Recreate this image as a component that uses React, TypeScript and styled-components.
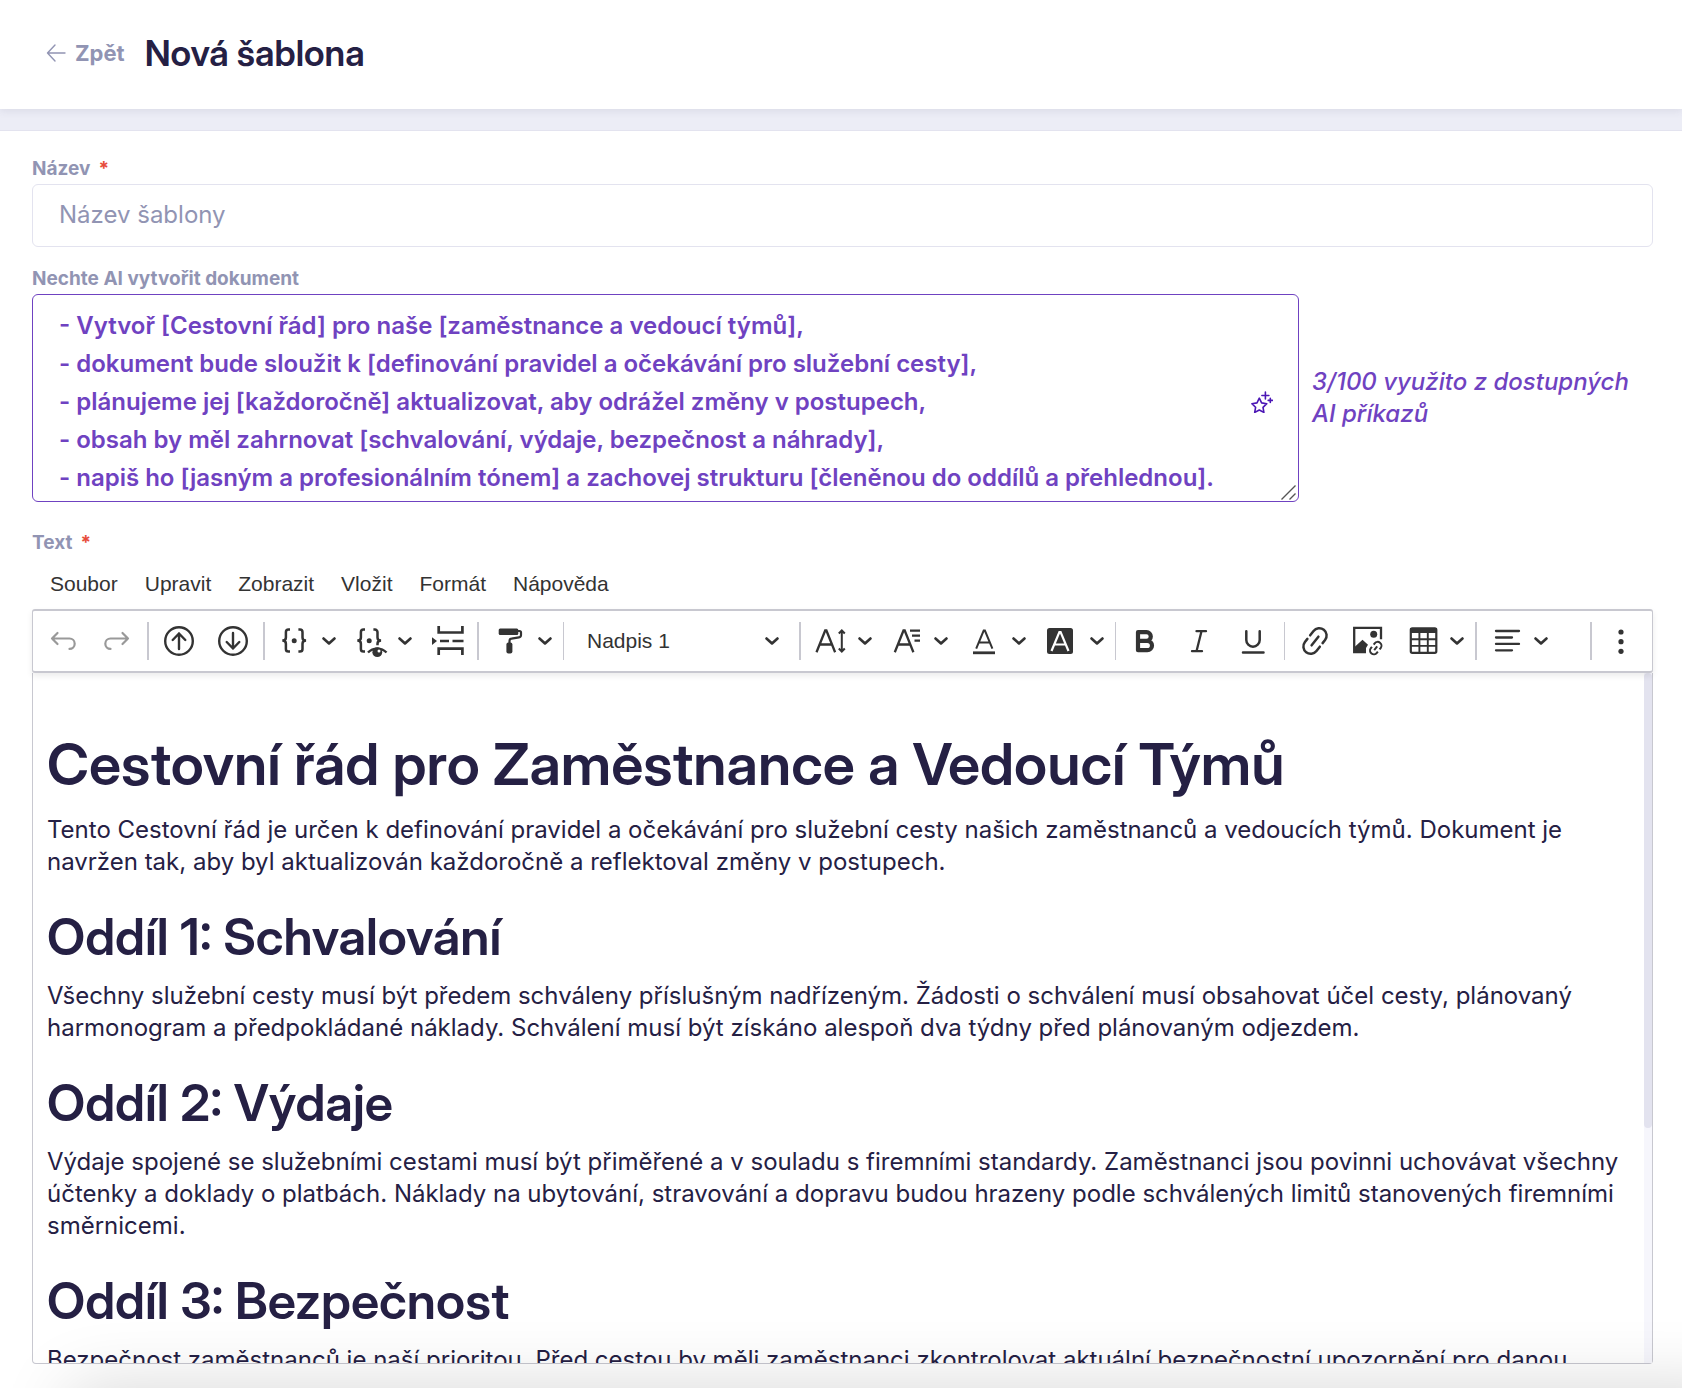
import React, { useState } from 'react';
import styled, { createGlobalStyle, css } from 'styled-components';

const color = {
  ink: '#252044',
  muted: '#9194b3',
  line: '#e3e3ef',
  band: '#ecedf6',
  purple: '#6f42c1',
  violet: '#4b16b5',
  red: '#e74c3c',
  tool: '#333333',
  toolLine: '#c8c8d0',
};

const GlobalStyle = createGlobalStyle`
  *, *::before, *::after { box-sizing: border-box; }
  body {
    margin: 0;
    background: #fff;
    color: ${color.ink};
    font-family: Inter, "Liberation Sans", sans-serif;
    font-size: 24px;
    line-height: 32px;
  }
  h1, h2 { font-family: "Inter Display", Inter, "Liberation Sans", sans-serif; font-variation-settings: "opsz" 32; }
  button, input, select, textarea { font: inherit; color: inherit; }
`;

const Page = styled.div`
  display: flex;
  flex-direction: column;
  height: 100vh;
  min-height: 900px;
  overflow: hidden;
`;

const Header = styled.header`
  position: relative;
  display: flex;
  align-items: center;
  gap: 20px;
  padding: 31px 46px 34px;
  background: #fff;
  box-shadow: 0 2px 8px rgba(60, 60, 100, 0.1);
`;

const BackLink = styled.a`
  display: flex;
  align-items: center;
  gap: 9px;
  color: ${color.muted};
  font-size: 22px;
  font-weight: 700;
  text-decoration: none;
`;

const Title = styled.h1`
  margin: 0;
  font-size: 36px;
  font-weight: 600;
  line-height: 44px;
`;

const Band = styled.div`
  display: flex;
  flex: 1;
  flex-direction: column;
  min-height: 0;
  background: ${color.band};
`;

const Form = styled.form`
  display: flex;
  flex: 1;
  flex-direction: column;
  min-height: 0;
  margin-top: 21px;
  padding: 24px 29px 24px 32px;
  border-top: 1px solid ${color.line};
  background: #fff;
`;

const Label = styled.label`
  display: block;
  padding-bottom: 1px;
  color: ${color.muted};
  font-size: 19px;
  font-weight: 700;
  line-height: 28px;
`;

const Required = styled.span`
  margin-left: 8px;
  color: ${color.red};
`;

const NameInput = styled.input`
  width: 100%;
  height: 63px;
  flex: none;
  margin-bottom: 18px;
  padding: 0 26px 2px;
  border: 1px solid ${color.line};
  border-radius: 6px;
  background: #fff;
  outline: none;
  &::placeholder { color: ${color.muted}; opacity: 1; }
`;

const PromptRow = styled.div`
  display: flex;
  align-items: center;
  gap: 13px;
  margin-bottom: 27px;
`;

const PromptBox = styled.div`
  position: relative;
  display: flex;
  flex: 1;
`;

const Prompt = styled.textarea`
  width: 100%;
  height: 208px;
  padding: 12px 60px 4px 26px;
  border: 1px solid ${color.purple};
  border-radius: 6px;
  background: #fff;
  color: ${color.purple};
  font-weight: 600;
  line-height: 38px;
  outline: none;
  overflow: hidden;
  resize: vertical;
  &::-webkit-resizer { display: none; }
`;

const Grip = styled.svg`
  position: absolute;
  right: 3px;
  bottom: 2px;
  pointer-events: none;
`;

const MagicButton = styled.button`
  position: absolute;
  top: 93px;
  right: 22px;
  display: grid;
  place-items: center;
  width: 30px;
  height: 30px;
  padding: 0;
  border: 0;
  background: none;
  color: ${color.violet};
`;

const Usage = styled.p`
  width: 341px;
  margin: 0;
  color: ${color.purple};
  font-style: italic;
  font-weight: 500;
`;

const Editor = styled.section`
  display: flex;
  flex: 1;
  flex-direction: column;
  min-height: 0;
  color: ${color.tool};
`;

const MenuBar = styled.nav`
  display: flex;
  gap: 27px;
  padding: 14px 18px 13px;
`;

const MenuItem = styled.button`
  padding: 0;
  border: 0;
  background: none;
  font-family: "Liberation Sans", Arial, sans-serif;
  font-size: 21px;
  line-height: 24px;
`;

const Toolbar = styled.div`
  position: relative;
  display: flex;
  align-items: center;
  height: 64px;
  flex: none;
  border: solid ${color.toolLine};
  border-width: 2px 1px;
  border-radius: 3px;
  background: #fff;
  box-shadow: 0 3px 6px rgba(0, 0, 0, 0.08);
`;

const Group = styled.div<{ $line?: number }>`
  display: flex;
  height: 38px;
  padding: 0 3px;
  border-right: ${(p) => p.$line ?? 0}px solid ${color.toolLine};
`;

const LastGroup = styled(Group)`
  margin-left: auto;
  border-left: 2px solid ${color.toolLine};
`;

const plainButton = css`
  display: flex;
  align-items: center;
  height: 38px;
  padding: 0;
  border: 0;
  background: none;
  color: ${color.tool};
`;

const ToolButton = styled.button`
  ${plainButton}
  justify-content: center;
  width: 54px;
  &:disabled { color: #999; }
`;

const MenuTool = styled.button`
  ${plainButton}
  gap: 10px;
  width: 76px;
  padding-left: 8px;
`;

const ArrowButton = styled.button`
  ${plainButton}
  width: 24px;
  padding-left: 2px;
`;

const SelectBox = styled.div`
  display: flex;
  align-items: center;
  width: 229px;
  padding-right: 17px;
`;

const FormatSelect = styled.select`
  flex: 1;
  height: 38px;
  padding: 0 0 0 20px;
  border: 0;
  appearance: none;
  background: none;
  font-family: "Liberation Sans", Arial, sans-serif;
  font-size: 21px;
`;

const Canvas = styled.div`
  display: flex;
  flex: 1;
  min-height: 0;
  border: 1px solid ${color.toolLine};
  border-top: 0;
  border-radius: 0 0 4px 4px;
`;

const Document = styled.article`
  flex: 1;
  min-width: 0;
  overflow: hidden;
  padding: 56px 14px 0;
  color: ${color.ink};
  outline: none;

  h1, h2 { margin: 0; font-weight: 600; }
  h1 { margin-bottom: 15px; font-size: 58px; line-height: 70px; }
  h2 { margin-bottom: 13px; font-size: 51px; line-height: 60px; }
  p { margin: 0 0 29px; }
`;

const Track = styled.div`
  width: 8px;
  flex: none;
  background: #f6f6fc;
`;

const Thumb = styled.div`
  height: 66%;
  border-radius: 4px;
  background: ${color.line};
`;

const BottomShade = styled.div`
  position: fixed;
  top: 100%;
  left: 70px;
  right: -60px;
  height: 140px;
  box-shadow: 0 0 70px rgba(0, 0, 0, 0.16);
  pointer-events: none;
`;

const Chevron = () => (
  <svg width="14" height="8" viewBox="0 0 14 8" fill="none" stroke="currentColor" strokeWidth="2.6" strokeLinecap="round" strokeLinejoin="round" aria-hidden="true">
    <path d="M1.5 1.5 7 6.5l5.5-5" />
  </svg>
);

const Icon = ({ children, w = 2.4 }: { children: React.ReactNode; w?: number }) => (
  <svg width="36" height="36" viewBox="0 0 36 36" fill="none" stroke="currentColor" strokeWidth={w} aria-hidden="true">
    {children}
  </svg>
);

const leftBrace = 'M14 6.6h-1.5a2.6 2.6 0 0 0-2.6 2.6v5.3c0 2-1.4 3.1-3.6 3.1 2.2 0 3.6 1.1 3.6 3.1V26a2.6 2.6 0 0 0 2.6 2.6H14';

const icons = {
  undo: (
    <Icon w={2.2}>
      <path strokeLinecap="round" strokeLinejoin="round" d="M12.5 10 7 15.5l5.5 5.5M7 15.5h17.5a5.2 5.2 0 0 1 0 10.4" />
    </Icon>
  ),
  redo: (
    <Icon w={2.2}>
      <path strokeLinecap="round" strokeLinejoin="round" d="M23.5 10l5.5 5.5-5.5 5.5M29 15.5H11.5a5.2 5.2 0 0 0 0 10.4" />
    </Icon>
  ),
  up: (
    <Icon>
      <circle cx="18" cy="18" r="13.8" />
      <path strokeLinecap="round" strokeLinejoin="round" d="M18 26V10.5M11.7 17 18 10.5l6.3 6.5" />
    </Icon>
  ),
  down: (
    <Icon>
      <circle cx="18" cy="18" r="13.8" />
      <path strokeLinecap="round" strokeLinejoin="round" d="M18 10v15.5M11.7 19l6.3 6.5 6.3-6.5" />
    </Icon>
  ),
  merge: (
    <Icon w={2.5}>
      <path d={leftBrace} />
      <path d={leftBrace} transform="matrix(-1 0 0 1 36.4 0)" />
      <circle cx="18.2" cy="17.7" r="2.5" fill="currentColor" stroke="none" />
    </Icon>
  ),
  preview: (
    <Icon w={2.5}>
      <path d="M13 6.6h-1.5a2.6 2.6 0 0 0-2.6 2.6v5.3c0 2-1.4 3.1-3.6 3.1 2.2 0 3.6 1.1 3.6 3.1V26a2.6 2.6 0 0 0 2.6 2.6H13" />
      <path d="M21.4 6.6h1.5a2.6 2.6 0 0 1 2.6 2.6v5.3c0 2 1.4 3.1 3.6 3.1-2.2 0-3.6 1.1-3.6 3.1v1.6" />
      <circle cx="17.2" cy="17.7" r="2.5" fill="currentColor" stroke="none" />
      <path d="M16 29.5c5-5.2 13.5-5.2 18.5 0" strokeWidth="2.4" />
      <circle cx="25.3" cy="29.2" r="4.9" fill="currentColor" stroke="none" />
      <circle cx="27" cy="28" r="1.5" fill="#fff" stroke="none" />
    </Icon>
  ),
  pageBreak: (
    <Icon w={2.7}>
      <path d="M9.7 3v6.5h23.7V3M9.7 32v-6.3h23.7V32M11 18h9M23.5 18h11" />
      <path d="M3 14.2 8 18l-5 4z" fill="currentColor" stroke="none" />
    </Icon>
  ),
  roller: (
    <Icon w={2.2}>
      <rect x="7.7" y="5.5" width="19.6" height="6.6" rx="1.5" fill="currentColor" stroke="none" />
      <path d="M27 8h1.5a1.5 1.5 0 0 1 1.5 1.5V12a2.4 2.4 0 0 1-2 2.4l-7.5 1.3a2.2 2.2 0 0 0-2 2.2V20" />
      <rect x="15.4" y="19.5" width="6" height="11" rx="2" fill="currentColor" stroke="none" />
    </Icon>
  ),
  fontSize: (
    <Icon w={2.3}>
      <path d="M4.5 29.3 13.2 7.5h1.2l8.7 21.8M7.5 21.5H20" />
      <path d="M29.8 7.5v21M26.8 10.5l3-3 3 3M26.8 25.5l3 3 3-3" strokeWidth="2" />
    </Icon>
  ),
  lineHeight: (
    <Icon w={2.3}>
      <path d="M6.8 29.3 15.5 7.5h1.2l8.7 21.8M9.8 21.5h12.5M22 7.7h10M24 12.7h8M26.5 17.7H32" />
    </Icon>
  ),
  textColor: (
    <Icon w={2}>
      <path d="M11.2 25.6 18.7 7.5h1.2l7.5 18.1M13.8 19.5h11" />
      <path d="M8 29.8h22" strokeWidth="2.8" />
    </Icon>
  ),
  highlight: (
    <Icon w={2.2}>
      <rect x="4" y="5" width="26" height="26" rx="2.5" fill="currentColor" stroke="none" />
      <path stroke="#fff" d="M8.5 28 16.4 9h1.2l7.9 19M11.2 21.5h11.6" />
    </Icon>
  ),
  bold: (
    <Icon w={4.2}>
      <path strokeLinejoin="round" d="M10 9.2h8.5a4.3 4.3 0 0 1 0 8.6H10zM10 17.8h9.3a4.7 4.7 0 0 1 0 9.4H10z" />
    </Icon>
  ),
  italic: (
    <Icon w={2.3}>
      <path strokeLinecap="round" d="M14.5 8.2H24M10 28.2h10M19.5 8.2l-5 20" />
    </Icon>
  ),
  underline: (
    <Icon w={2.5}>
      <path strokeLinecap="round" d="M10.3 8.2V17a6.7 6.7 0 0 0 13.4 0V8.2M7 29.5h20.5" />
    </Icon>
  ),
  link: (
    <Icon w={2.5}>
      <g transform="rotate(-52 18 18)" strokeLinecap="round">
        <path d="M15 10.7h-4a7.3 7.3 0 0 0 0 14.6h5.5M21 25.3h4a7.3 7.3 0 0 0 0-14.6h-5.5M12.5 18h11" />
      </g>
    </Icon>
  ),
  image: (
    <Icon w={2.3}>
      <path d="M15 29H3.2V4.8H30v11.5" />
      <circle cx="22.7" cy="11.3" r="3.5" fill="currentColor" stroke="none" />
      <path d="M3 24.5l8.5-7.8 5.5 5-2 3.3v5H3z" fill="currentColor" stroke="none" />
      <g transform="translate(16.5 17) rotate(-52 8.2 8.2)" strokeWidth="2">
        <path d="M7 4.4H5.2a3.8 3.8 0 0 0 0 7.6h1.6M9.6 12h1.8a3.8 3.8 0 0 0 0-7.6H9.8M5.8 8.2h4.8" />
      </g>
    </Icon>
  ),
  table: (
    <Icon w={1.9}>
      <rect x="6.8" y="5.3" width="25.5" height="24.5" rx="1.5" strokeWidth="2.2" />
      <path d="M6 5h27v5H6z" fill="currentColor" stroke="none" />
      <path d="M15.4 9v21M23.8 9v21M7 16.3h25M7 22.9h25" />
    </Icon>
  ),
  align: (
    <Icon w={2.3}>
      <path strokeLinecap="round" d="M8 8h23M8 14.5h16M8 20.9h23M8 27.3h16" />
    </Icon>
  ),
  more: (
    <Icon>
      <g fill="currentColor" stroke="none">
        <circle cx="17" cy="9" r="2.6" />
        <circle cx="17" cy="18.7" r="2.6" />
        <circle cx="17" cy="28.3" r="2.6" />
      </g>
    </Icon>
  ),
};

type IconName = keyof typeof icons;

const Tool = ({ icon, label, disabled }: { icon: IconName; label: string; disabled?: boolean }) => (
  <ToolButton type="button" aria-label={label} disabled={disabled}>{icons[icon]}</ToolButton>
);

const DropTool = ({ icon, label }: { icon: IconName; label: string }) => (
  <MenuTool type="button" aria-label={label}>{icons[icon]}<Chevron /></MenuTool>
);

const SplitTool = ({ icon, label }: { icon: IconName; label: string }) => (
  <>
    <Tool icon={icon} label={label} />
    <ArrowButton type="button" aria-label={`${label} – možnosti`}><Chevron /></ArrowButton>
  </>
);

const BackArrow = () => (
  <svg width="20" height="18" viewBox="0 0 20 18" fill="none" stroke="currentColor" strokeWidth="1.4" strokeLinecap="round" strokeLinejoin="round" aria-hidden="true">
    <path d="M9 1 1.5 9 9 17M1.5 9H19" />
  </svg>
);

const Sparkle = () => (
  <svg width="22" height="22" viewBox="0 0 22 22" fill="none" stroke="currentColor" strokeWidth="1.6" strokeLinecap="round" strokeLinejoin="round" aria-hidden="true">
    <path d="M8.3 7.2l2.3 4.7 5.2.8-3.8 3.6.9 5.1-4.6-2.4-4.6 2.4.9-5.1L.9 12.7l5.1-.8z" />
    <path d="M14.4 1v7M10.9 4.5h7M19.3 7.3v4.2M17.2 9.4h4.2" />
  </svg>
);

const menus = ['Soubor', 'Upravit', 'Zobrazit', 'Vložit', 'Formát', 'Nápověda'];

const initialPrompt = [
  '- Vytvoř [Cestovní řád] pro naše [zaměstnance a vedoucí týmů],',
  '- dokument bude sloužit k [definování pravidel a očekávání pro služební cesty],',
  '- plánujeme jej [každoročně] aktualizovat, aby odrážel změny v postupech,',
  '- obsah by měl zahrnovat [schvalování, výdaje, bezpečnost a náhrady],',
  '- napiš ho [jasným a profesionálním tónem] a zachovej strukturu [členěnou do oddílů a přehlednou].',
].join('\n');

const sections = [
  {
    title: 'Oddíl 1: Schvalování',
    text: 'Všechny služební cesty musí být předem schváleny příslušným nadřízeným. Žádosti o schválení musí obsahovat účel cesty, plánovaný harmonogram a předpokládané náklady. Schválení musí být získáno alespoň dva týdny před plánovaným odjezdem.',
  },
  {
    title: 'Oddíl 2: Výdaje',
    text: 'Výdaje spojené se služebními cestami musí být přiměřené a v souladu s firemními standardy. Zaměstnanci jsou povinni uchovávat všechny účtenky a doklady o platbách. Náklady na ubytování, stravování a dopravu budou hrazeny podle schválených limitů stanovených firemními směrnicemi.',
  },
  {
    title: 'Oddíl 3: Bezpečnost',
    text: 'Bezpečnost zaměstnanců je naší prioritou. Před cestou by měli zaměstnanci zkontrolovat aktuální bezpečnostní upozornění pro danou',
  },
];

export default function App() {
  const [name, setName] = useState('');
  const [prompt, setPrompt] = useState(initialPrompt);

  return (
    <>
      <GlobalStyle />
      <Page>
        <Header>
          <BackLink href="#zpet"><BackArrow />Zpět</BackLink>
          <Title>Nová šablona</Title>
        </Header>
        <Band>
          <Form onSubmit={(e) => e.preventDefault()}>
            <Label htmlFor="name">Název<Required>*</Required></Label>
            <NameInput id="name" placeholder="Název šablony" value={name} onChange={(e) => setName(e.target.value)} />

            <Label htmlFor="prompt">Nechte AI vytvořit dokument</Label>
            <PromptRow>
              <PromptBox>
                <Prompt id="prompt" spellCheck={false} value={prompt} onChange={(e) => setPrompt(e.target.value)} />
                <MagicButton type="button" aria-label="Vytvořit pomocí AI"><Sparkle /></MagicButton>
                <Grip width="15" height="15" viewBox="0 0 15 15" fill="none" stroke="#555" strokeWidth="1.4" aria-hidden="true">
                  <path d="M.5 14.5l14-14M8.5 14.5l6-6" />
                </Grip>
              </PromptBox>
              <Usage>3/100 využito z dostupných AI příkazů</Usage>
            </PromptRow>

            <Label as="div" id="text-label">Text<Required>*</Required></Label>
            <Editor aria-labelledby="text-label">
              <MenuBar>
                {menus.map((m) => <MenuItem type="button" key={m}>{m}</MenuItem>)}
              </MenuBar>
              <Toolbar role="toolbar">
                <Group $line={2}>
                  <Tool icon="undo" label="Zpět" disabled />
                  <Tool icon="redo" label="Znovu" disabled />
                </Group>
                <Group $line={2}>
                  <Tool icon="up" label="Nahoru" />
                  <Tool icon="down" label="Dolů" />
                </Group>
                <Group $line={2}>
                  <DropTool icon="merge" label="Proměnné" />
                  <DropTool icon="preview" label="Náhled proměnných" />
                  <Tool icon="pageBreak" label="Konec stránky" />
                </Group>
                <Group $line={1}>
                  <SplitTool icon="roller" label="Kopírovat formát" />
                </Group>
                <Group $line={2}>
                  <SelectBox>
                    <FormatSelect aria-label="Styl odstavce" defaultValue="Nadpis 1">
                      <option>Nadpis 1</option>
                      <option>Nadpis 2</option>
                      <option>Odstavec</option>
                    </FormatSelect>
                    <Chevron />
                  </SelectBox>
                </Group>
                <Group $line={1}>
                  <DropTool icon="fontSize" label="Velikost písma" />
                  <DropTool icon="lineHeight" label="Výška řádku" />
                  <SplitTool icon="textColor" label="Barva textu" />
                  <SplitTool icon="highlight" label="Barva pozadí" />
                </Group>
                <Group $line={1}>
                  <Tool icon="bold" label="Tučné" />
                  <Tool icon="italic" label="Kurzíva" />
                  <Tool icon="underline" label="Podtržené" />
                </Group>
                <Group $line={2}>
                  <Tool icon="link" label="Odkaz" />
                  <Tool icon="image" label="Obrázek" />
                  <DropTool icon="table" label="Tabulka" />
                </Group>
                <Group>
                  <DropTool icon="align" label="Zarovnání" />
                </Group>
                <LastGroup>
                  <Tool icon="more" label="Další" />
                </LastGroup>
              </Toolbar>
              <Canvas>
                <Document contentEditable suppressContentEditableWarning spellCheck={false}>
                  <h1>Cestovní řád pro Zaměstnance a Vedoucí Týmů</h1>
                  <p>Tento Cestovní řád je určen k definování pravidel a očekávání pro služební cesty našich zaměstnanců a vedoucích týmů. Dokument je navržen tak, aby byl aktualizován každoročně a reflektoval změny v postupech.</p>
                  {sections.map((s) => (
                    <React.Fragment key={s.title}>
                      <h2>{s.title}</h2>
                      <p>{s.text}</p>
                    </React.Fragment>
                  ))}
                </Document>
                <Track><Thumb /></Track>
              </Canvas>
            </Editor>
          </Form>
        </Band>
      </Page>
      <BottomShade />
    </>
  );
}
